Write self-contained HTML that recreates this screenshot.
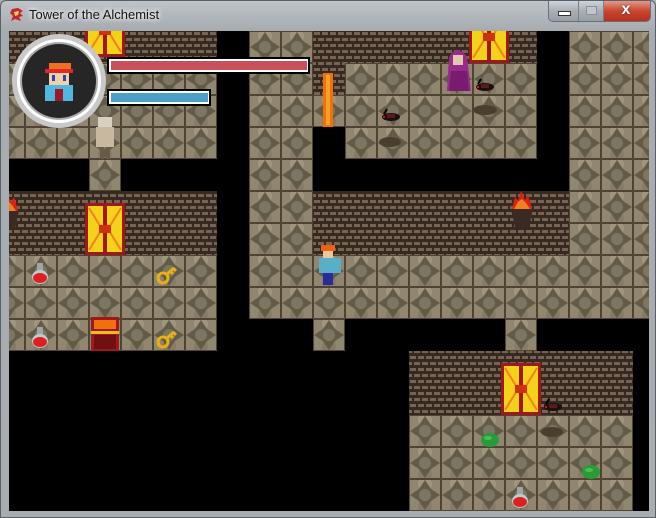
<!DOCTYPE html>
<html><head><meta charset="utf-8"><style>
html,body{margin:0;padding:0;width:656px;height:518px;overflow:hidden;background:#a8adb2}
#win{position:absolute;left:0;top:0;width:656px;height:518px;background:linear-gradient(#bfc4c9,#a6abb0 30px,#a8adb2);box-sizing:border-box;border:1px solid #5a6068;border-radius:6px 6px 0 0}
#title{position:absolute;left:28px;top:6px;font:13px "Liberation Sans",sans-serif;color:#111;text-shadow:0 0 6px #fff,0 0 4px #fff}
#btns{position:absolute;left:547px;top:0;width:101px;height:20px;border:1px solid #6a7078;border-top:none;border-radius:0 0 5px 5px;overflow:hidden;display:flex}
.b{height:20px;background:linear-gradient(#d0d4d8,#a8aeb4 50%,#989ea4);border-right:1px solid #7a8088;position:relative}
#svgw{position:absolute;left:8px;top:30px}
</style></head><body>
<div id="win">
<svg style="position:absolute;left:8px;top:6px" width="16" height="16" viewBox="0 0 16 16"><path d="M3 2 L9 1 L14 4 L11 6 L14 9 L10 10 L12 14 L6 12 L2 14 L4 9 L1 6 Z" fill="#c0282a"/><path d="M5 5 L10 4 L9 8 L6 9 Z" fill="#f4d060"/></svg>
<div id="title">Tower of the Alchemist</div>
<div id="btns">
<div class="b" style="width:29px"><div style="position:absolute;left:9px;top:10px;width:11px;height:3px;background:#fff;border:1px solid #333"></div></div>
<div class="b" style="width:25px"><div style="position:absolute;left:7px;top:5px;width:9px;height:7px;border:1px solid #8a9098;background:#c0c6cc"></div></div>
<div style="width:46px;height:20px;background:linear-gradient(#e39a88,#c9462f 50%,#b8301e);position:relative"><span style="position:absolute;left:17px;top:0px;font:bold 16px 'Liberation Sans',sans-serif;color:#fff;text-shadow:0 0 2px #333">x</span></div>
</div>
<svg id="svgw" width="640" height="480" viewBox="8 30 640 480" xmlns="http://www.w3.org/2000/svg">
<defs>
<pattern id="fl" x="-8" y="30" width="32" height="32" patternUnits="userSpaceOnUse">
<rect width="32" height="32" fill="#918670"/>
<circle cx="16" cy="5" r="7" fill="#a0957f"/><circle cx="16" cy="27" r="7" fill="#857b66"/>
<polygon points="16,1 22,10 31,16 22,22 16,31 10,22 1,16 10,10" fill="#625b47"/>
<circle cx="16" cy="16" r="6" fill="#7d7662"/>
<rect width="32" height="32" fill="none" stroke="#4f4434" stroke-width="2"/>
</pattern>
<pattern id="br" x="0" y="30" width="16" height="12" patternUnits="userSpaceOnUse">
<rect width="16" height="12" fill="#36291f"/>
<rect x="1" y="1" width="6" height="3" fill="#766353"/><rect x="9" y="1" width="6" height="3" fill="#766353"/>
<rect x="5" y="7" width="6" height="3" fill="#766353"/><rect x="13" y="7" width="3" height="3" fill="#766353"/><rect x="0" y="7" width="3" height="3" fill="#766353"/>
</pattern>
<g id="door"><rect width="40" height="52" fill="#a01818"/><rect x="3" y="3" width="15" height="46" fill="#f4d21a"/><rect x="22" y="3" width="15" height="46" fill="#f4d21a"/><path d="M4 5 L17 26 L4 47 M36 5 L23 26 L36 47" stroke="#f08020" stroke-width="2" fill="none"/><rect x="14" y="22" width="12" height="8" fill="#d03010"/></g>
<g id="pot"><rect x="6" y="0" width="6" height="8" fill="#9aa8a8"/><ellipse cx="9" cy="14" rx="8" ry="7" fill="#bcc"/><ellipse cx="9" cy="15" rx="7" ry="5" fill="#e02020"/></g>
<g id="key"><circle cx="6" cy="11" r="5" fill="none" stroke="#e8b010" stroke-width="3"/><path d="M9 8 L17 1 M13 4 L16 7 M16 1 L19 4" stroke="#e8b010" stroke-width="3"/></g>
<g id="rat"><ellipse cx="10" cy="8" rx="9" ry="4" fill="#1a1010"/><rect x="6" y="5" width="8" height="4" fill="#5a1a20"/><rect x="2" y="7" width="2" height="2" fill="#e01010"/><path d="M3 5 L6 0" stroke="#000" stroke-width="2"/></g>
<g id="slime"><ellipse cx="9" cy="7" rx="9" ry="7" fill="#2a9a3a"/><ellipse cx="7" cy="5" rx="4" ry="2" fill="#4ac050"/></g>
<g id="torch"><path d="M2 18 L24 18 L20 36 L6 36 Z" fill="#3a2a22"/><path d="M3 18 L6 6 L9 10 L12 0 L16 9 L19 4 L23 18 Z" fill="#e02010"/><path d="M5 18 L9 11 L13 8 L17 12 L21 18 Z" fill="#f08020"/></g>
</defs>
<rect x="8" y="30" width="640" height="480" fill="#000"/>
<g fill="url(#fl)">
<rect x="8" y="62" width="208" height="96"/>
<rect x="88" y="158" width="32" height="32"/>
<rect x="248" y="30" width="64" height="288"/>
<rect x="312" y="94" width="32" height="32"/>
<rect x="344" y="62" width="192" height="96"/>
<rect x="568" y="30" width="80" height="288"/>
<rect x="8" y="254" width="208" height="96"/>
<rect x="248" y="254" width="320" height="64"/>
<rect x="312" y="318" width="32" height="32"/>
<rect x="504" y="318" width="32" height="32"/>
<rect x="408" y="414" width="224" height="96"/>
</g>
<g fill="url(#br)">
<rect x="8" y="30" width="208" height="32"/>
<rect x="312" y="30" width="224" height="32"/>
<rect x="312" y="62" width="32" height="32"/>
<rect x="8" y="190" width="208" height="64"/>
<rect x="312" y="190" width="256" height="64"/>
<rect x="408" y="350" width="224" height="64"/>
</g>
<use href="#door" x="84" y="4"/>
<use href="#door" x="468" y="10"/>
<use href="#door" x="84" y="202"/>
<use href="#door" x="500" y="362"/>
<rect x="322" y="72" width="10" height="54" fill="#f07010"/><rect x="325" y="74" width="4" height="50" fill="#f8a020"/>
<ellipse cx="484" cy="109" rx="12" ry="5" fill="#4a3e2e"/>
<ellipse cx="389" cy="141" rx="11" ry="5" fill="#4a3e2e"/>
<ellipse cx="551" cy="431" rx="11" ry="5" fill="#4a3e2e"/>
<use href="#rat" x="380" y="108"/><use href="#rat" x="474" y="78"/><use href="#rat" x="542" y="398"/>
<path d="M446 90 L448 56 Q457 42 466 56 L470 90 Z" fill="#9a2a8a"/><rect x="452" y="54" width="10" height="10" fill="#e0c8b0"/><path d="M450 70 L466 70 L468 90 L448 90Z" fill="#7a1a70"/>
<rect x="97" y="116" width="14" height="10" fill="#d8d0c0"/><rect x="95" y="126" width="18" height="20" fill="#c8b8a0"/><rect x="99" y="146" width="4" height="12" fill="#6a5a4a"/><rect x="105" y="146" width="4" height="12" fill="#6a5a4a"/>
<use href="#torch" x="-6" y="192"/><use href="#torch" x="508" y="190"/>
<use href="#pot" x="30" y="262"/><use href="#pot" x="30" y="326"/><use href="#pot" x="510" y="486"/>
<use href="#key" x="156" y="266"/><use href="#key" x="156" y="330"/>
<rect x="90" y="316" width="28" height="34" fill="#a01818"/><rect x="93" y="319" width="22" height="9" fill="#f07010"/><rect x="93" y="334" width="22" height="14" fill="#701010"/><rect x="90" y="330" width="28" height="3" fill="#e8c020"/>
<use href="#slime" x="480" y="432"/><use href="#slime" x="581" y="464"/>
<rect x="320" y="244" width="14" height="6" fill="#f06010"/><rect x="322" y="250" width="10" height="7" fill="#e8c8a0"/><rect x="318" y="257" width="22" height="15" fill="#58b0c8"/><rect x="322" y="272" width="10" height="12" fill="#2a2a9a"/>
<circle cx="58" cy="80" r="47" fill="#c8c8c8"/><circle cx="58" cy="80" r="42" fill="#fff"/><circle cx="58" cy="80" r="39" fill="#aaa"/><circle cx="58" cy="80" r="37" fill="#262626"/>
<rect x="48" y="62" width="22" height="6" fill="#f07020"/><rect x="44" y="68" width="28" height="4" fill="#e02828"/><rect x="48" y="72" width="20" height="12" fill="#f0d0a8"/><rect x="51" y="74" width="3" height="6" fill="#3040c0"/><rect x="62" y="74" width="3" height="6" fill="#3040c0"/><rect x="44" y="84" width="28" height="16" fill="#50b8e0"/><rect x="54" y="88" width="8" height="12" fill="#9a1a2a"/>
<rect x="106" y="56" width="203" height="17" fill="#000"/><rect x="108" y="58" width="199" height="13" fill="#fff"/><rect x="110" y="60" width="196" height="9" fill="#c8505a"/>
<rect x="106" y="88" width="104" height="17" fill="#000"/><rect x="108" y="90" width="100" height="13" fill="#fff"/><rect x="110" y="92" width="97" height="9" fill="#4aa0c8"/>
</svg>
</div>
</body></html>
